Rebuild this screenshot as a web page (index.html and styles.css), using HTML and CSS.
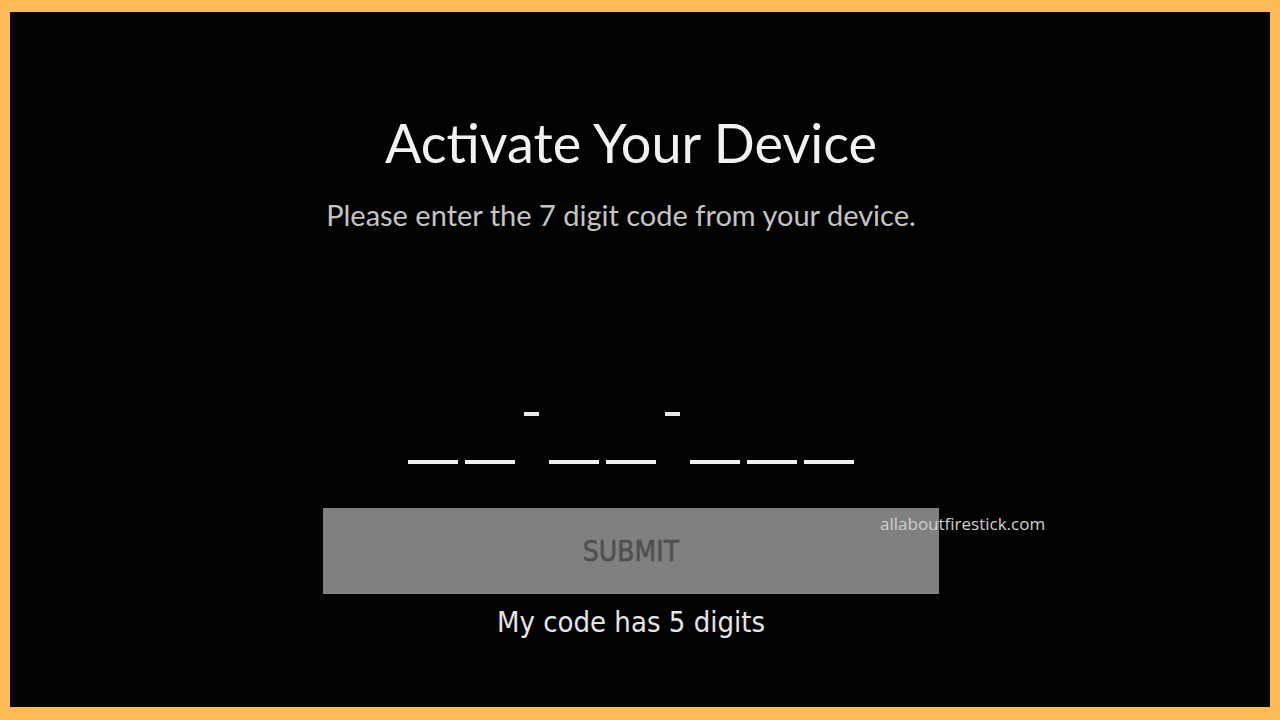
FILE: index.html
```html
<!DOCTYPE html>
<html>
<head>
<meta charset="utf-8">
<link rel="stylesheet" href="styles.css">
</head>
<body>
<div class="frame">
  <div class="screen">
    <h1 class="title">Activate Your Device</h1>
    <p class="subtitle">Please enter the 7 digit code from your device.</p>
    <div class="code">
      <div class="group">
        <span class="slot"></span><span class="slot"></span>
      </div>
      <span class="sep"></span>
      <div class="group">
        <span class="slot"></span><span class="slot"></span>
      </div>
      <span class="sep"></span>
      <div class="group">
        <span class="slot"></span><span class="slot"></span><span class="slot"></span>
      </div>
    </div>
    <div class="button-row">
      <button class="submit">SUBMIT</button>
      <span class="watermark">allaboutfirestick.com</span>
    </div>
    <p class="alt">My code has 5 digits</p>
  </div>
</div>
</body>
</html>
```
FILE: styles.css
```css
* { box-sizing: border-box; }
html, body { margin: 0; padding: 0; }
body { width: 1280px; height: 720px; background: #ffbb55; overflow: hidden; }
.frame {
  width: 1280px; height: 720px;
  padding: 12px 10px 13px 10px;
  background: #ffbb55;
}
.screen {
  width: 1260px; height: 695px;
  background: #020202;
  display: flex; flex-direction: column; align-items: center;
  padding: 101px 18px 0 0;
  font-family: Lato, "Liberation Sans", sans-serif;
}
.title {
  margin: 0;
  font-family: Lato, sans-serif;
  font-weight: 400;
  font-size: 54px;
  line-height: 60px;
  color: #f2f2f2;
}
.subtitle {
  margin: 25px 20px 0 0;
  font-size: 29px;
  line-height: 34px;
  color: #c4c4c4;
}
.code {
  margin-top: 180px;
  display: flex; align-items: flex-end;
  height: 52px;
}
.group { display: flex; gap: 7px; }
.slot { display: block; width: 50px; height: 4px; background: #f0f0f0; }
.sep {
  display: block; width: 34px; height: 52px; position: relative;
}
.sep::before {
  content: ""; position: absolute; left: 9px; top: 0; width: 15px; height: 4px; background: #e8e8e8;
}
.button-row { position: relative; margin-top: 44px; }
.submit {
  display: block;
  width: 616px; height: 86px;
  background: #808080;
  border: none;
  color: #505050;
  font-family: "DejaVu Sans Condensed", "DejaVu Sans", sans-serif;
  font-size: 28px;
  -webkit-text-stroke: 0.6px #505050;
  padding: 0;
}
.watermark {
  position: absolute; left: 557px; top: 4px;
  font-family: "Open Sans", sans-serif;
  font-size: 17px;
  line-height: 23px;
  color: #d0d0d0;
  white-space: nowrap;
}
.alt {
  margin: 11px 0 0 0;
  font-family: "DejaVu Sans Condensed", "DejaVu Sans", sans-serif;
  font-size: 29px;
  line-height: 34px;
  color: #e4e4e4;
}
```
